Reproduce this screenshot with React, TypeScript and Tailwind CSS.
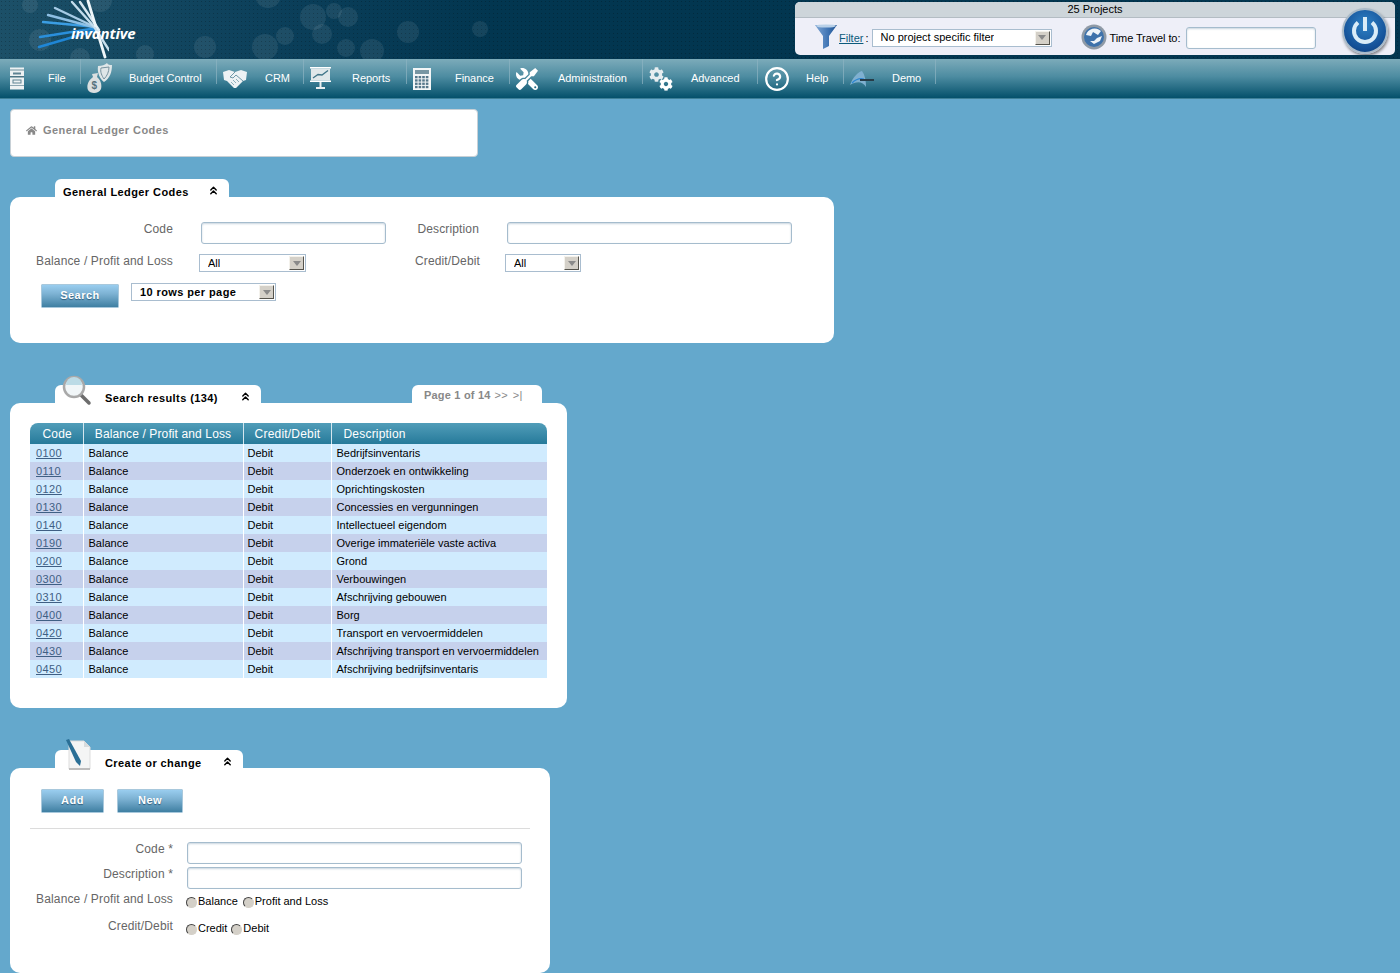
import type { ReactNode } from "react";
import { ChevronsUp, CircleHelp } from "lucide-react";
import { FaCog, FaHome, FaTools } from "react-icons/fa";

const rows = [
  ["0100", "Bedrijfsinventaris"],
  ["0110", "Onderzoek en ontwikkeling"],
  ["0120", "Oprichtingskosten"],
  ["0130", "Concessies en vergunningen"],
  ["0140", "Intellectueel eigendom"],
  ["0190", "Overige immateriële vaste activa"],
  ["0200", "Grond"],
  ["0300", "Verbouwingen"],
  ["0310", "Afschrijving gebouwen"],
  ["0400", "Borg"],
  ["0420", "Transport en vervoermiddelen"],
  ["0430", "Afschrijving transport en vervoermiddelen"],
  ["0450", "Afschrijving bedrijfsinventaris"],
];

const bubbles = [
  [313, 17, 13], [334, 11, 8], [348, 17, 10], [322, 34, 10], [285, 36, 9], [346, 48, 9],
  [372, 51, 12], [408, 32, 11], [265, 47, 13], [205, 47, 11], [268, -5, 13], [40, 40, 11],
  [100, 0, 12], [480, 29, 8], [80, 58, 10], [145, 54, 9], [30, 5, 8],
];

function HeaderBackdrop() {
  return (
    <svg className="absolute inset-0 h-full w-full" aria-hidden>
      <defs>
        <pattern id="dots" width="4" height="4" patternUnits="userSpaceOnUse">
          <rect x="1" y="1" width="1" height="1" fill="#000" opacity="0.22" />
        </pattern>
        <linearGradient id="sweep" x1="0" x2="1" y1="0" y2="0">
          <stop offset="0" stopColor="#1c5068" />
          <stop offset="0.2" stopColor="#0b3f5a" />
          <stop offset="0.35" stopColor="#023650" />
          <stop offset="1" stopColor="#023650" />
        </linearGradient>
      </defs>
      <rect width="100%" height="100%" fill="url(#sweep)" />
      {bubbles.map(([cx, cy, r]) => (
        <circle key={`${cx}-${cy}`} cx={cx} cy={cy} r={r} fill="#fff" opacity="0.08" />
      ))}
      <rect width="100%" height="100%" fill="url(#dots)" />
    </svg>
  );
}

function Logo() {
  return (
    <div className="relative ml-[37px] h-[59px] w-[105px]">
      <svg width="72" height="59" viewBox="0 0 72 59" className="absolute left-0 top-0" aria-hidden>
        <g strokeLinecap="round" strokeWidth="2.4">
          <path d="M2 47 L60 30" stroke="#1f86d6" />
          <path d="M3 37 L60 28" stroke="#2a8fdc" />
          <path d="M6 22 L60 27" stroke="#3b9de2" />
          <path d="M11 15 L60 28" stroke="#8dbfe4" />
          <path d="M18 8 L60 28" stroke="#a6cbe6" />
          <path d="M35 2 L60 30" stroke="#c2dcec" />
          <path d="M43 2 L62 30" stroke="#d7e8f2" />
          <path d="M51 1 L68 57" stroke="#eef6fa" strokeWidth="2.8" />
          <path d="M58 28 L72 50" stroke="#c7dfed" />
        </g>
      </svg>
      <span className="absolute left-[34px] top-[23px] font-['Open_Sans',sans-serif] text-[15px] font-bold italic leading-[20px] tracking-[-0.15px] text-white">
        invantive
      </span>
    </div>
  );
}

function FilterIcon() {
  return (
    <svg width="22" height="25" viewBox="0 0 22 25" aria-hidden>
      <defs>
        <linearGradient id="funnel" x1="0" x2="1" y1="0" y2="0">
          <stop offset="0" stopColor="#7fa6d4" />
          <stop offset="0.6" stopColor="#3f74b4" />
          <stop offset="1" stopColor="#1c4f8f" />
        </linearGradient>
      </defs>
      <path d="M0 1 H22 L14 12 V22 L8 25 V12 Z" fill="url(#funnel)" />
      <ellipse cx="11" cy="2" rx="10" ry="1.6" fill="#b8d0e8" />
    </svg>
  );
}

function ClockIcon() {
  return (
    <svg width="26" height="28" viewBox="0 0 26 28" aria-hidden>
      <circle cx="13" cy="14" r="12.5" fill="#8f9aa6" />
      <circle cx="13" cy="14" r="10" fill="#3e72ab" />
      <path d="M5 12 A9 9 0 0 1 20 8 L17 12 L12 9 L10 13 Z" fill="#eef3f8" />
      <path d="M9 18 L13 21 L19 18 L21 13 L16 15 L13 18 Z" fill="#eef3f8" />
    </svg>
  );
}

function PowerIcon() {
  return (
    <div className="absolute right-[7px] top-[6px] h-[46px] w-[46px] rounded-full border-[2px] border-[#a9bac8] bg-[radial-gradient(circle_at_50%_35%,#2f82c6,#134f96_70%,#0c3566)] shadow-[1px_2px_3px_rgba(0,0,0,0.45)]">
      <svg width="42" height="42" viewBox="0 0 42 42" aria-hidden>
        <path d="M14 12.5 A11 11 0 1 0 28 12.5" fill="none" stroke="#d9ecf8" strokeWidth="4" />
        <path d="M21 7 V21" stroke="#d9ecf8" strokeWidth="4" />
      </svg>
    </div>
  );
}

function CabinetIcon() {
  return (
    <svg width="16" height="23" viewBox="0 0 16 23" aria-hidden>
      <rect x="1" y="0.5" width="14" height="22" fill="#eef2f3" />
      <rect x="1" y="2.5" width="14" height="1" fill="#6d8d9b" />
      <rect x="1" y="9" width="14" height="1.5" fill="#4d7686" />
      <rect x="1" y="18" width="14" height="1" fill="#8da7b2" />
      <rect x="4" y="5.5" width="8" height="2" fill="#5f8393" />
      <rect x="4" y="13" width="8" height="3" fill="none" stroke="#5f8393" />
    </svg>
  );
}

function BudgetIcon() {
  return (
    <svg width="25" height="31" viewBox="0 0 25 31" aria-hidden>
      <path d="M11 3 C15 3 18 2 20 0 C21 2 23 2 25 2 C25 9 23 15 17 19 C13 16 10 10 11 3 Z" fill="#dfe6e8" />
      <path d="M14 5 L22 4 C22 9 20 13 17 16 C15 13 13 9 14 5 Z" fill="none" stroke="#77929e" />
      <path d="M5 11 L11 10 L10 14 C14 17 15 22 14 26 C12 31 3 31 1 27 C-1 22 2 17 6 14 Z" fill="#dadfe0" />
      <text x="4.5" y="26" fontSize="10" fontWeight="700" fill="#55707c" fontFamily="Liberation Sans, sans-serif">$</text>
    </svg>
  );
}

function HandshakeIcon() {
  return (
    <svg width="24" height="20" viewBox="0 0 24 20" aria-hidden>
      <path d="M0 3 L6 1 L12 3 L18 1 L24 3 L23 11 L20 12 L13 19 L11 19 L4 12 L1 11 Z" fill="#edf2f4" />
      <path d="M12 3 L7 8 L10 9 L13 6 L20 12" stroke="#6f98a8" fill="none" />
      <path d="M8 13 L11 16 M10 11 L13 14 M13 10 L16 13" stroke="#8fb0bc" fill="none" />
    </svg>
  );
}

function BoardIcon() {
  return (
    <svg width="21" height="23" viewBox="0 0 21 23" aria-hidden>
      <rect x="0" y="0" width="21" height="1.5" fill="#fff" />
      <rect x="1" y="1.5" width="19" height="12" fill="#dfe7ea" />
      <path d="M3 11 L8 7.5 L12 8 L18 3.5" stroke="#3f7488" strokeWidth="1.3" fill="none" />
      <rect x="0" y="13.5" width="21" height="1.5" fill="#fff" />
      <rect x="9.5" y="15" width="2" height="5" fill="#e8eef0" />
      <rect x="6" y="20" width="9" height="2" fill="#e8eef0" />
    </svg>
  );
}

function CalculatorIcon() {
  return (
    <svg width="18" height="22" viewBox="0 0 18 22" aria-hidden>
      <rect width="18" height="22" fill="#f3f6f7" />
      <rect x="2" y="2" width="14" height="4" fill="#7896a3" />
      {[0, 1, 2, 3].map((row) =>
        [0, 1, 2, 3].map((col) => (
          <rect key={`${row}${col}`} x={2 + col * 3.6} y={8 + row * 3.3} width="2.6" height="2.3" fill="#55778a" />
        ))
      )}
    </svg>
  );
}

function GearsIcon() {
  return (
    <div className="relative h-[24px] w-[24px]">
      <FaCog className="absolute left-0 top-0 text-[15px] text-[#e6edf0]" />
      <FaCog className="absolute bottom-0 right-0 text-[14px] text-white" />
    </div>
  );
}

function DemoIcon() {
  return (
    <svg width="24" height="16" viewBox="0 0 24 16" aria-hidden>
      <path d="M0 14 C3 6 8 1 12 0 C15 4 16 10 16 16 C13 10 6 10 0 14 Z" fill="#7fb0d0" />
      <path d="M2 12 C6 8 10 7 14 8" stroke="#2c86d2" strokeWidth="1.2" fill="none" />
      <rect x="10" y="8" width="14" height="2" fill="#273c48" />
    </svg>
  );
}

const nav: { label: string; width: string; icon: ReactNode }[] = [
  { label: "File", width: "w-[81px]", icon: <CabinetIcon /> },
  { label: "Budget Control", width: "w-[136px]", icon: <BudgetIcon /> },
  { label: "CRM", width: "w-[87px]", icon: <HandshakeIcon /> },
  { label: "Reports", width: "w-[103px]", icon: <BoardIcon /> },
  { label: "Finance", width: "w-[103px]", icon: <CalculatorIcon /> },
  { label: "Administration", width: "w-[133px]", icon: <FaTools className="-scale-x-100 text-[22px] text-white" /> },
  { label: "Advanced", width: "w-[115px]", icon: <GearsIcon /> },
  { label: "Help", width: "w-[86px]", icon: <CircleHelp size={26} strokeWidth={2} className="text-white" /> },
  { label: "Demo", width: "w-[92px]", icon: <DemoIcon /> },
];

function NavBar() {
  return (
    <nav className="flex h-[40px] items-center border-b border-[#3d7f97] bg-[linear-gradient(#7cabba,#4d8ca1_45%,#04506b)]">
      {nav.map((item, i) => (
        <div key={item.label} className={`relative flex h-[39px] items-center ${item.width}`}>
          <div className={`flex w-[48px] shrink-0 items-center ${i === 0 ? "pl-[9px]" : "pl-[6px]"}`}>{item.icon}</div>
          <span className="mt-[-1px] whitespace-nowrap text-[11px] leading-[26px] tracking-[-0.06px] text-white">{item.label}</span>
          <span className="absolute right-0 top-0 h-[25px] w-[1px] bg-[#8db4c2]/70" />
        </div>
      ))}
    </nav>
  );
}

function Arrow() {
  return (
    <span className="flex h-[14px] w-[15px] shrink-0 items-center justify-center border border-b-[#55534c] border-l-[#f4f2ec] border-r-[#55534c] border-t-[#f4f2ec] bg-[#d4d0c8]">
      <span className="h-0 w-0 border-x-[4px] border-t-[5px] border-x-transparent border-t-[#8a8a8a]" />
    </span>
  );
}

function Select({ label, className, bold }: { label: string; className: string; bold?: boolean }) {
  return (
    <div className={`flex h-[18px] items-center justify-between border border-[#a9bdcf] bg-white pl-[8px] pr-[1px] text-[11px] text-black ${bold ? "font-bold tracking-[0.4px]" : ""} ${className}`}>
      <span className="truncate">{label}</span>
      <Arrow />
    </div>
  );
}

function TextBox({ className }: { className: string }) {
  return <div className={`h-[22px] rounded-[3px] border border-[#a5bccd] bg-white shadow-[inset_0_1px_2px_rgba(120,150,175,0.4)] ${className}`} />;
}

function Label({ children, className = "w-[163px]" }: { children: ReactNode; className?: string }) {
  return <span className={`shrink-0 whitespace-nowrap text-right text-[12px] leading-[14px] tracking-[0.14px] text-[#666] ${className}`}>{children}</span>;
}

function Button({ label, className }: { label: string; className: string }) {
  return (
    <button className={`h-[24px] rounded-[1px] border border-[#a8c8dc] bg-[linear-gradient(#99cdef,#7db2d3_40%,#3f7fa2)] pb-[2px] text-[11px] font-bold tracking-[0.5px] text-white [text-shadow:0_1px_1px_rgba(0,40,70,0.55)] ${className}`}>
      {label}
    </button>
  );
}

function Tab({ label, className, icon }: { label: string; className: string; icon?: ReactNode }) {
  return (
    <div className={`relative flex h-[18px] items-center justify-between rounded-t-[6px] bg-white text-[11px] font-bold tracking-[0.42px] text-black ${className}`}>
      {icon}
      <span className="mt-[7px] whitespace-nowrap leading-[14px]">{label}</span>
      <ChevronsUp size={13} strokeWidth={2.6} className="mt-[5px]" />
    </div>
  );
}

function Radio({ label }: { label: string }) {
  return (
    <span className="flex items-center text-[11px] leading-[14px] text-black">
      <span className="mt-[3px] h-[11px] w-[11px] rounded-full border border-b-[#d4d0c8] border-l-[#444] border-r-[#d4d0c8] border-t-[#444] bg-[#d4d0c8]" />
      <span className="ml-[1px] mt-[-1px]">{label}</span>
    </span>
  );
}

function MagnifierIcon() {
  return (
    <svg className="absolute left-[7px] top-[-10px]" width="30" height="31" viewBox="0 0 30 31" aria-hidden>
      <path d="M18 19 L27 28" stroke="#6d6d6d" strokeWidth="3.5" strokeLinecap="round" />
      <circle cx="12" cy="12" r="10" fill="#f1f6f8" stroke="#a9a9a9" strokeWidth="2.5" />
      <path d="M4 10 A8 8 0 0 1 20 10 Z" fill="#bcdbe6" />
    </svg>
  );
}

function PenIcon() {
  return (
    <svg className="absolute left-[9px] top-[-11px]" width="28" height="32" viewBox="0 0 28 32" aria-hidden>
      <path d="M5 2 H20 L26 8 V30 H5 Z" fill="#f4f5f5" stroke="#dddddd" />
      <path d="M20 2 V8 H26 Z" fill="#d9dcdd" />
      <path d="M2 1 L5 0 L17 22 L16 27 L12 23 Z" fill="#2a6f96" />
      <path d="M5 30 H26" stroke="#bdbdbd" strokeWidth="2" />
    </svg>
  );
}

export default function App() {
  return (
    <div className="min-h-[973px] bg-[#64a8cc] font-['Liberation_Sans',Arial,sans-serif]">
      <header className="relative h-[59px] overflow-hidden">
        <HeaderBackdrop />
        <div className="relative flex h-full justify-between">
          <Logo />
          <div className="relative mr-[5px] mt-[2px] h-[53px] w-[600px] overflow-hidden rounded-[5px] bg-[#eeeff8]">
            <div className="h-[16px] border-b border-[#b3bcc3] bg-[#cdd5da] text-center text-[11px] leading-[15px] text-black">25 Projects</div>
            <div className="flex items-center pl-[20px] pt-[4px] text-[11px] text-black">
              <FilterIcon />
              <a className="ml-[2px] mt-[3px] text-[#0c5a7c] underline">Filter </a>
              <span className="ml-[2px] mt-[3px]">:</span>
              <Select label="No project specific filter" className="ml-[3px] mt-[2px] w-[180px]" />
              <div className="ml-[29px] mt-[1px]"><ClockIcon /></div>
              <span className="ml-[3px] mt-[3px] whitespace-nowrap tracking-[-0.1px]">Time Travel to:</span>
              <TextBox className="ml-[6px] mt-[3px] w-[130px]" />
            </div>
            <PowerIcon />
          </div>
        </div>
      </header>
      <NavBar />

      <main className="px-[10px] pt-[10px]">
        <div className="flex h-[48px] w-[468px] items-start gap-[6px] rounded-[4px] border border-[#c7d0d6] bg-white pl-[15px] pt-[12px] text-[11px] font-bold tracking-[0.42px] text-[#888]">
          <FaHome className="mt-[3px] text-[11px]" />
          <span>General Ledger Codes</span>
        </div>

        <Tab label="General Ledger Codes" className="ml-[45px] mt-[22px] w-[174px] pl-[8px] pr-[9px]" />
        <section className="h-[146px] w-[824px] rounded-[10px] bg-white pt-[25px]">
          <div className="flex h-[22px] items-start">
            <Label>Code</Label>
            <TextBox className="ml-[28px] w-[185px]" />
            <Label className="w-[93px]">Description</Label>
            <TextBox className="ml-[28px] w-[285px]" />
          </div>
          <div className="mt-[10px] flex h-[18px] items-start">
            <Label>Balance / Profit and Loss</Label>
            <Select label="All" className="ml-[26px] w-[107px]" />
            <Label className="ml-[80px] w-[94px]">Credit/Debit</Label>
            <Select label="All" className="ml-[25px] w-[76px]" />
          </div>
          <div className="ml-[31px] mt-[11px] flex items-start">
            <Button label="Search" className="mt-[1px] w-[78px]" />
            <Select label="10 rows per page" bold className="ml-[12px] w-[145px]" />
          </div>
        </section>

        <div className="ml-[45px] mt-[42px] flex w-[487px] justify-between">
          <Tab label="Search results (134)" icon={<MagnifierIcon />} className="w-[206px] pl-[50px] pr-[9px]" />
          <div className="flex h-[18px] w-[130px] items-center gap-[4px] rounded-t-[6px] bg-white pl-[12px] pt-[2px] text-[11px] font-bold tracking-[0.2px] text-[#888]">
            <span>Page 1 of 14</span>
            <span className="font-normal">&gt;&gt;</span>
            <span className="ml-[1px] font-normal">&gt;|</span>
          </div>
        </div>
        <section className="h-[305px] w-[557px] rounded-[10px] bg-white px-[20px] pt-[20px]">
          <table className="w-[517px] table-fixed border-collapse text-[11px] text-black">
            <colgroup>
              <col className="w-[53px]" />
              <col className="w-[160px]" />
              <col className="w-[88px]" />
              <col />
            </colgroup>
            <thead>
              <tr className="h-[21px] bg-[linear-gradient(#519db9,#267a9a)] text-[12px] font-normal tracking-[0.2px] text-white">
                <th className="rounded-tl-[8px] border-r border-[#d4e6ee] pl-[2px] font-normal">Code</th>
                <th className="border-r border-[#d4e6ee] font-normal tracking-[0.12px]">Balance / Profit and Loss</th>
                <th className="border-r border-[#d4e6ee] pl-[1px] font-normal">Credit/Debit</th>
                <th className="rounded-tr-[8px] pl-[12px] text-left font-normal">Description</th>
              </tr>
            </thead>
            <tbody>
              {rows.map(([code, description], i) => (
                <tr key={code} className={`h-[18px] leading-[18px] ${i % 2 === 0 ? "bg-[#d0ebfe]" : "bg-[#c6d1ec]"}`}>
                  <td className="border-r border-white pl-[6px]">
                    <a className="tracking-[0.35px] text-[#3f5f84] underline">{code}</a>
                  </td>
                  <td className="border-r border-white pl-[5px]">Balance</td>
                  <td className="border-r border-white pl-[4px]">Debit</td>
                  <td className="pl-[5px]">{description}</td>
                </tr>
              ))}
            </tbody>
          </table>
        </section>

        <Tab label="Create or change" icon={<PenIcon />} className="ml-[45px] mt-[42px] w-[188px] pl-[50px] pr-[9px]" />
        <section className="h-[205px] w-[540px] rounded-[10px] bg-white pt-[21px]">
          <div className="ml-[31px] flex gap-[13px]">
            <Button label="Add" className="w-[63px]" />
            <Button label="New" className="w-[66px]" />
          </div>
          <div className="ml-[20px] mt-[15px] w-[500px] border-t border-[#dcdcdc]" />
          <div className="mt-[13px] flex h-[22px] items-start">
            <Label>Code *</Label>
            <TextBox className="ml-[14px] w-[335px]" />
          </div>
          <div className="mt-[3px] flex h-[22px] items-start">
            <Label>Description *</Label>
            <TextBox className="ml-[14px] w-[335px]" />
          </div>
          <div className="mt-[3px] flex items-start">
            <Label>Balance / Profit and Loss</Label>
            <div className="ml-[13px] mt-[2px] flex gap-[5px]">
              <Radio label="Balance" />
              <Radio label="Profit and Loss" />
            </div>
          </div>
          <div className="mt-[11px] flex items-start">
            <Label>Credit/Debit</Label>
            <div className="ml-[13px] mt-[2px] flex gap-[4px]">
              <Radio label="Credit" />
              <Radio label="Debit" />
            </div>
          </div>
        </section>
      </main>
    </div>
  );
}
